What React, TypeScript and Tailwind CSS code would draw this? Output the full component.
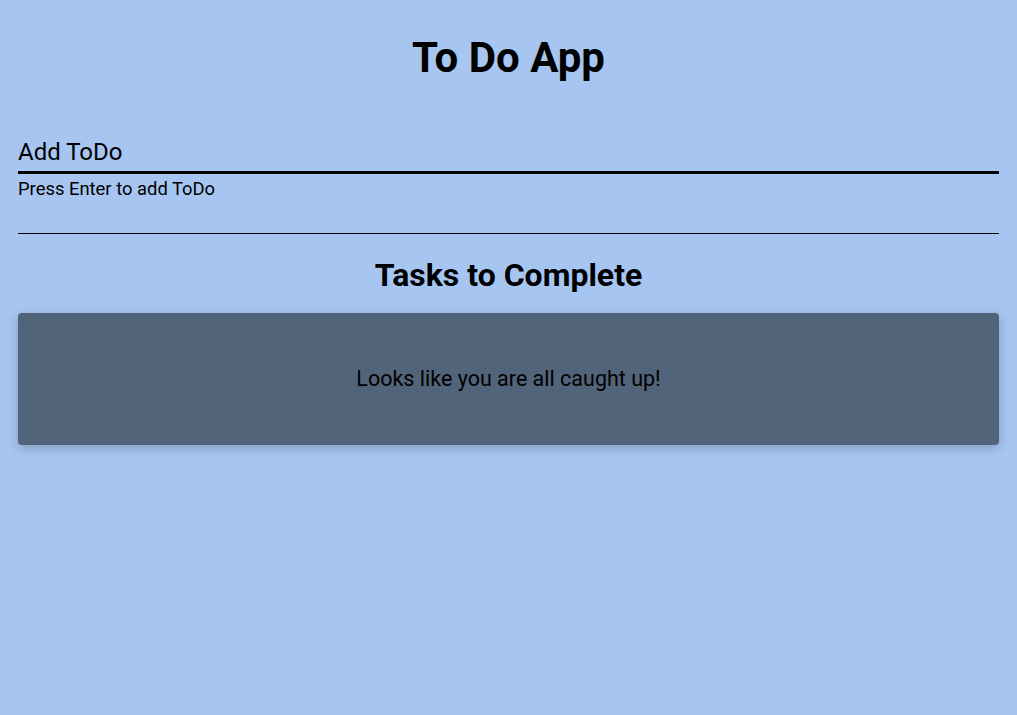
export default function App() {
  return (
    <div className="min-h-[715px] w-full bg-[#a6c6f1] px-[18px] text-black" style={{ fontFamily: "Roboto, sans-serif" }}>
      <h1 className="pt-[33px] text-center text-[42px] font-bold leading-[50px]">To Do App</h1>
      <div className="mt-[54px]">
        <div className="border-b-[3px] border-black pb-[4px] text-[24px] leading-[30px]">Add ToDo</div>
        <div className="mt-[4px] text-[18.4px] leading-[22px]">Press Enter to add ToDo</div>
      </div>
      <hr className="mt-[33px] border-t border-black" />
      <h2 className="mt-[21px] text-center text-[32px] font-bold leading-[40px]">Tasks to Complete</h2>
      <div className="mt-[18px] flex h-[132px] items-center justify-center rounded-[4px] bg-[#526479] shadow-[0_3px_12px_rgba(0,0,0,0.22)]">
        <span className="text-[21.5px] leading-[26px]">Looks like you are all caught up!</span>
      </div>
    </div>
  );
}
